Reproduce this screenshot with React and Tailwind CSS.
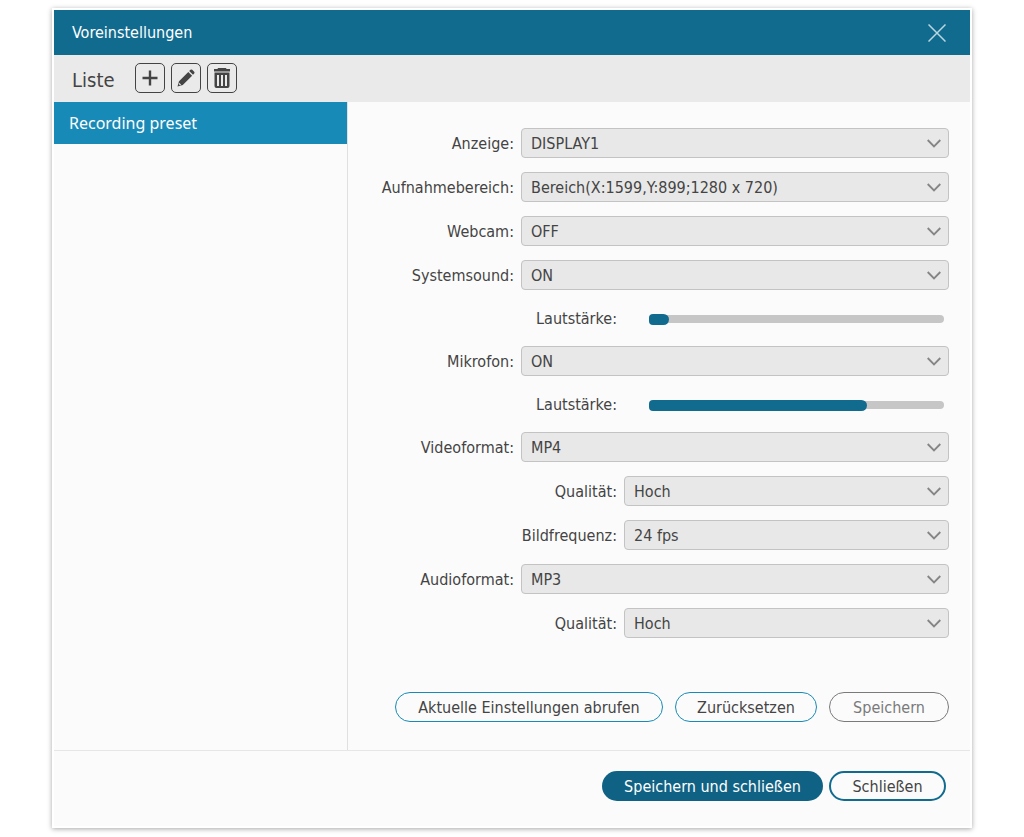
import { useId, useState } from 'react';
import clsx from 'clsx';

function Row({ id, label, nested, children }) {
  return (
    <div className="flex items-center gap-[7px]">
      <label htmlFor={id} className={clsx('shrink-0 pt-0.5 text-right', nested ? 'w-[269px]' : 'w-[166px]')}>
        {label}:
      </label>
      {children}
    </div>
  );
}

function SelectRow({ label, options, nested }) {
  const id = useId();
  return (
    <Row id={id} label={label} nested={nested}>
      <div className="relative min-w-0 flex-1">
        <select
          id={id}
          className="block h-[30px] w-full appearance-none rounded border border-[#c3c3c3] bg-[#e8e8e8] pt-0.5 pr-9 pl-[9px]"
        >
          {options.map((o) => (
            <option key={o}>{o}</option>
          ))}
        </select>
        <svg
          viewBox="0 0 14 9"
          className="pointer-events-none absolute top-[11px] right-2 h-[9px] w-[14px]"
          fill="none"
          stroke="#858585"
          strokeWidth="1.8"
        >
          <path d="M0.7 1 7 7.5 13.3 1" />
        </svg>
      </div>
    </Row>
  );
}

function VolumeRow({ initial }) {
  const id = useId();
  const [value, setValue] = useState(initial);
  return (
    <div className="flex h-7 items-center pt-0.5">
      <label htmlFor={id} className="w-[269px] shrink-0 text-right">
        Lautstärke:
      </label>
      <div className="mr-[5px] ml-8 grid flex-1 items-center *:col-start-1 *:row-start-1">
        <span className="h-2 rounded-sm bg-[#c6c6c6]" />
        <span
          className="h-[11px] rounded-l-sm bg-[#116b8f]"
          style={{ width: `calc((100% - 11px) * ${value / 100} + 5px)` }}
        />
        <input
          id={id}
          type="range"
          min="0"
          max="100"
          value={value}
          onChange={(e) => setValue(Number(e.target.value))}
          className="h-[11px] w-full appearance-none bg-transparent [&::-webkit-slider-thumb]:size-[11px] [&::-webkit-slider-thumb]:appearance-none [&::-webkit-slider-thumb]:rounded-full [&::-webkit-slider-thumb]:bg-[#116b8f]"
        />
      </div>
    </div>
  );
}

function ToolButton({ label, children }) {
  return (
    <button
      type="button"
      aria-label={label}
      className="flex size-[30px] items-center justify-center rounded-[5px] border border-[#444] text-[#444]"
    >
      <svg viewBox="0 0 20 20" className="size-5" fill="none">
        {children}
      </svg>
    </button>
  );
}

export default function App() {
  return (
    <main className="bg-white px-[52px] py-2 font-['DejaVu_Sans_Condensed','Noto_Sans',sans-serif] text-base leading-6 text-[#444]">
      <div className="border-2 border-white bg-[#fbfbfb] shadow-[0_1px_5px_rgba(0,0,0,0.35)]">
        <header className="flex h-[45px] items-center justify-between bg-[#116b8f] pr-6 pl-[18px] text-white">
          <h1>Voreinstellungen</h1>
          <button type="button" aria-label="Fenster schließen">
            <svg viewBox="0 0 18 18" className="size-[18px]" fill="none" stroke="#b9d6e1" strokeWidth="1.5">
              <path d="M0.5 0.5 17.5 17.5M17.5 0.5 0.5 17.5" />
            </svg>
          </button>
        </header>

        <div className="flex h-[47px] items-center bg-[#eaeaea] pl-[18px]">
          <h2 className="mr-5 pt-0.5 text-xl">Liste</h2>
          <div className="flex gap-1.5 pb-0.5">
            <ToolButton label="Hinzufügen">
              <path d="M10 2.5v15M2.5 10h15" stroke="currentColor" strokeWidth="2.4" />
            </ToolButton>
            <ToolButton label="Bearbeiten">
              <path
                fill="currentColor"
                d="M1.5 18.5 3 13.2 12.3 3.9 16.1 7.7 6.8 17ZM13.2 3 14.4 1.8Q15.3 1 16.2 1.8L18.2 3.8Q19 4.7 18.2 5.6L17 6.8Z"
              />
              <path d="m3 15.4 1.6 1.6" stroke="#eaeaea" strokeWidth="1.2" />
            </ToolButton>
            <ToolButton label="Löschen">
              <path fill="currentColor" d="M6 0h8l.5 1h3.5v2.6H2V1h3.5Z" />
              <path
                fill="currentColor"
                fillRule="evenodd"
                d="M2.5 4.5h15V18q0 2-2 2h-11q-2 0-2-2ZM5 7v11h2V7ZM9 7v11h2V7ZM13 7v11h2V7Z"
              />
            </ToolButton>
          </div>
        </div>

        <div className="flex border-b border-[#e6e6e6]">
          <nav className="w-[294px] shrink-0 border-r border-[#e0e0e0]">
            <a
              href="#recording-preset"
              className="flex h-[42px] items-center bg-[#188ab8] pl-[15px] font-['Noto_Sans',sans-serif] text-white"
            >
              Recording preset
            </a>
          </nav>

          <form className="min-w-0 flex-1 pt-[26px] pr-[21px] pb-7">
            <div className="flex flex-col gap-3.5">
              <SelectRow label="Anzeige" options={['DISPLAY1']} />
              <SelectRow label="Aufnahmebereich" options={['Bereich(X:1599,Y:899;1280 x 720)']} />
              <SelectRow label="Webcam" options={['OFF', 'ON']} />
              <SelectRow label="Systemsound" options={['ON', 'OFF']} />
              <VolumeRow initial={3} />
              <SelectRow label="Mikrofon" options={['ON', 'OFF']} />
              <VolumeRow initial={73} />
              <SelectRow label="Videoformat" options={['MP4']} />
              <SelectRow nested label="Qualität" options={['Hoch']} />
              <SelectRow nested label="Bildfrequenz" options={['24 fps']} />
              <SelectRow label="Audioformat" options={['MP3']} />
              <SelectRow nested label="Qualität" options={['Hoch']} />
            </div>

            <div className="mt-[54px] flex justify-end gap-3">
              <button type="button" className="h-[30px] w-[268px] rounded-full border border-[#188ab8] pt-0.5">
                Aktuelle Einstellungen abrufen
              </button>
              <button type="button" className="h-[30px] w-[142px] rounded-full border border-[#188ab8] pt-0.5">
                Zurücksetzen
              </button>
              <button
                type="button"
                disabled
                className="h-[30px] w-[120px] rounded-full border border-[#7a7a7a] pt-0.5 text-[#7a7a7a]"
              >
                Speichern
              </button>
            </div>
          </form>
        </div>

        <footer className="flex justify-end gap-1.5 pt-5 pr-6 pb-[25px]">
          <button type="button" className="h-[30px] w-[221px] rounded-full bg-[#106284] pt-0.5 text-white">
            Speichern und schließen
          </button>
          <button type="button" className="h-[30px] w-[117px] rounded-full border-2 border-[#116b8f] pt-0.5">
            Schließen
          </button>
        </footer>
      </div>
    </main>
  );
}
